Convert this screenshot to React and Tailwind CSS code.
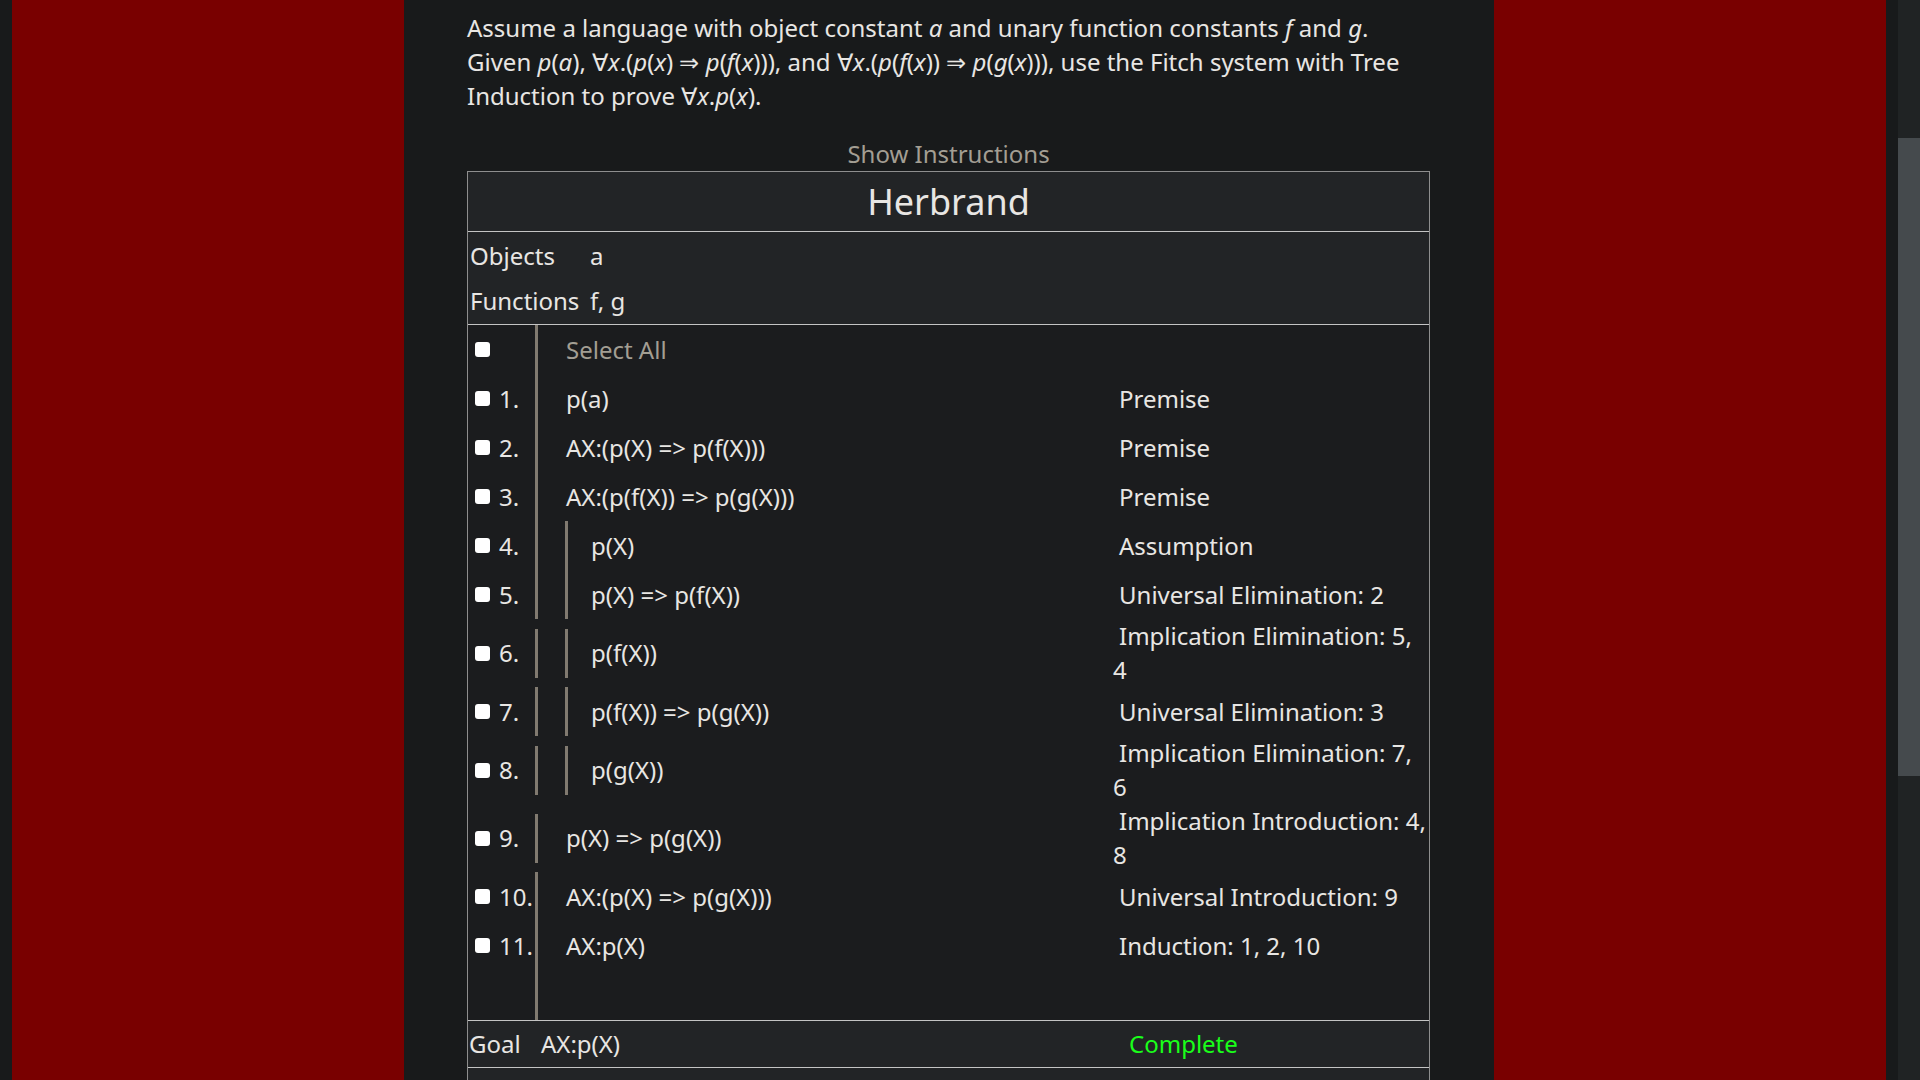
import React from 'react';

const rows = [
  { n: '1.', f: 'p(a)', j: 'Premise', d: 0 },
  { n: '2.', f: 'AX:(p(X) => p(f(X)))', j: 'Premise', d: 0 },
  { n: '3.', f: 'AX:(p(f(X)) => p(g(X)))', j: 'Premise', d: 0 },
  { n: '4.', f: 'p(X)', j: 'Assumption', d: 1 },
  { n: '5.', f: 'p(X) => p(f(X))', j: 'Universal Elimination: 2', d: 1 },
  { n: '6.', f: 'p(f(X))', j: 'Implication Elimination: 5, 4', d: 1 },
  { n: '7.', f: 'p(f(X)) => p(g(X))', j: 'Universal Elimination: 3', d: 1 },
  { n: '8.', f: 'p(g(X))', j: 'Implication Elimination: 7, 6', d: 1 },
  { n: '9.', f: 'p(X) => p(g(X))', j: 'Implication Introduction: 4, 8', d: 0 },
  { n: '10.', f: 'AX:(p(X) => p(g(X)))', j: 'Universal Introduction: 9', d: 0 },
  { n: '11.', f: 'AX:p(X)', j: 'Induction: 1, 2, 10', d: 0 },
];

const Box = () => (
  <input type="checkbox" className="appearance-none w-[15px] h-[15px] rounded-[3px] bg-white shrink-0" />
);

const I = ({ children }) => <i className="italic">{children}</i>;

const ProofRow = ({ row }) => (
  <div className="flex items-center">
    <div className="w-[67px] flex items-center gap-[9px] pl-[7px] shrink-0">
      <Box />
      <span>{row.n}</span>
    </div>
    <div className="w-[578px] shrink-0 flex items-center">
      <div className="h-[49px] border-l-[3px] border-[#817a70] pl-[28px] flex items-center">
        {row.d === 1 ? (
          <div className="h-[49px] -ml-[1px] border-l-[3px] border-[#817a70] pl-[23px] flex items-center">
            {row.f}
          </div>
        ) : (
          row.f
        )}
      </div>
    </div>
    <div className="flex-1 indent-[6px] leading-[34px]">{row.j}</div>
  </div>
);

export default function App() {
  return (
    <div className="flex w-[1920px] h-[1080px] overflow-hidden bg-[#181a1b] text-[#e8e6e3] font-['Noto_Sans',sans-serif] text-[24px]">
      <div className="w-[12px] shrink-0" />
      <div className="w-[392px] shrink-0 bg-[#790000]" />

      <main className="w-[1090px] shrink-0 pl-[63px] pr-[64px]">
        <p className="mt-[11px] leading-[34px]">
          Assume a language with object constant <I>a</I> and unary function constants <I>f</I> and <I>g</I>.
          Given <I>p</I>(<I>a</I>), ∀<I>x</I>.(<I>p</I>(<I>x</I>) ⇒ <I>p</I>(<I>f</I>(<I>x</I>))), and ∀<I>x</I>.(<I>p</I>(<I>f</I>(<I>x</I>)) ⇒ <I>p</I>(<I>g</I>(<I>x</I>))),
          use the Fitch system with Tree Induction to prove ∀<I>x</I>.<I>p</I>(<I>x</I>).
        </p>

        <div className="mt-[24px] text-center leading-[34px] text-[#a39e93]">Show Instructions</div>

        <div className="border-x border-t border-[#8e8e8e] h-[1000px]">
          {/* header */}
          <div className="h-[59px] bg-[#222426] flex items-center justify-center text-[36px]">Herbrand</div>

          {/* signature */}
          <div className="border-t border-[#c4c4c4] bg-[#222426] pt-[1px] pb-[1px] pl-[2px]">
            <div className="h-[45px] flex items-center">
              <span className="w-[120px]">Objects</span>
              <span>a</span>
            </div>
            <div className="h-[45px] flex items-center">
              <span className="w-[120px]">Functions</span>
              <span>f, g</span>
            </div>
          </div>

          {/* proof */}
          <div className="border-t border-[#c4c4c4] bg-[#1b1c1e]">
            <div className="flex items-center">
              <div className="w-[67px] pl-[7px] shrink-0 flex items-center">
                <Box />
              </div>
              <div className="h-[49px] border-l-[3px] border-[#817a70] pl-[28px] flex items-center text-[#a39e93]">
                Select All
              </div>
            </div>
            {rows.map((r) => (
              <ProofRow key={r.n} row={r} />
            ))}
            <div className="flex">
              <div className="w-[67px] shrink-0" />
              <div className="h-[50px] border-l-[3px] border-[#817a70]" />
            </div>
          </div>

          {/* goal */}
          <div className="border-y border-[#c4c4c4] bg-[#222426] h-[48px] flex items-center pl-[1px]">
            <span className="w-[72px]">Goal</span>
            <span className="w-[588px]">AX:p(X)</span>
            <span className="text-[#1aff1a]">Complete</span>
          </div>
          <div className="bg-[#222426] h-[200px]" />
        </div>
      </main>

      <div className="w-[392px] shrink-0 bg-[#790000]" />
      <div className="w-[12px] shrink-0" />
      <div className="w-[22px] shrink-0 bg-[#202324] pt-[138px]">
        <div className="h-[638px] bg-[#454a4d]" />
      </div>
    </div>
  );
}
